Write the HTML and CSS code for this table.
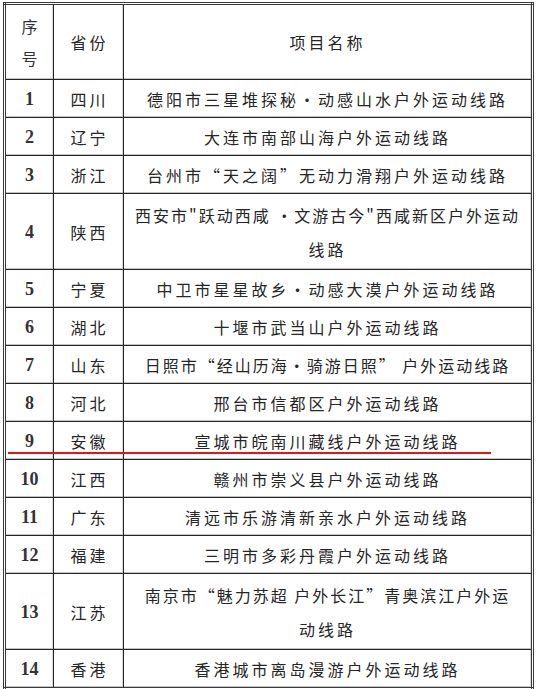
FILE: index.html
```html
<!DOCTYPE html>
<html lang="zh-CN">
<head>
<meta charset="utf-8">
<link rel="stylesheet" href="styles.css">
</head>
<body>
<div class="sheet">
  <table class="list">
    <colgroup>
      <col class="c-no">
      <col class="c-prov">
      <col class="c-name">
    </colgroup>
    <tr class="head">
      <td class="no hd"><span class="hd-line">序</span><span class="hd-line">号</span></td>
      <td class="prov">省份</td>
      <td class="name">项目名称</td>
    </tr>
    <tr><td class="no">1</td><td class="prov">四川</td><td class="name">德阳市三星堆探秘•动感山水户外运动线路</td></tr>
    <tr><td class="no">2</td><td class="prov">辽宁</td><td class="name">大连市南部山海户外运动线路</td></tr>
    <tr><td class="no">3</td><td class="prov">浙江</td><td class="name">台州市“天之阔”无动力滑翔户外运动线路</td></tr>
    <tr class="tall"><td class="no">4</td><td class="prov">陕西</td><td class="name two"><span class="line tight">西安市"跃动西咸 •文游古今"西咸新区户外运动</span><span class="line">线路</span></td></tr>
    <tr><td class="no">5</td><td class="prov">宁夏</td><td class="name">中卫市星星故乡•动感大漠户外运动线路</td></tr>
    <tr><td class="no">6</td><td class="prov">湖北</td><td class="name">十堰市武当山户外运动线路</td></tr>
    <tr><td class="no">7</td><td class="prov">山东</td><td class="name"><span class="tight">日照市“经山历海•骑游日照” 户外运动线路</span></td></tr>
    <tr><td class="no">8</td><td class="prov">河北</td><td class="name">邢台市信都区户外运动线路</td></tr>
    <tr><td class="no">9</td><td class="prov">安徽</td><td class="name">宣城市皖南川藏线户外运动线路</td></tr>
    <tr><td class="no">10</td><td class="prov">江西</td><td class="name">赣州市崇义县户外运动线路</td></tr>
    <tr><td class="no">11</td><td class="prov">广东</td><td class="name">清远市乐游清新亲水户外运动线路</td></tr>
    <tr><td class="no">12</td><td class="prov">福建</td><td class="name">三明市多彩丹霞户外运动线路</td></tr>
    <tr class="tall"><td class="no">13</td><td class="prov">江苏</td><td class="name two"><span class="line tight">南京市“魅力苏超 户外长江”青奥滨江户外运</span><span class="line">动线路</span></td></tr>
    <tr><td class="no">14</td><td class="prov">香港</td><td class="name">香港城市离岛漫游户外运动线路</td></tr>
  </table>
  <div class="mark"></div>
</div>
</body>
</html>
```

FILE: styles.css
```css
html, body {
  margin: 0;
  padding: 0;
  background: #ffffff;
}

body {
  width: 538px;
  height: 689px;
  overflow: hidden;
  font-family: "Noto Sans CJK SC", "Liberation Serif", serif;
  color: #262626;
}

.sheet {
  position: relative;
  padding: 2px 0 0 3px;
}

.list {
  border-collapse: collapse;
  table-layout: fixed;
  width: 531px;
  border: 3px double #3a3a3a;
}

.c-no { width: 49px; }
.c-prov { width: 70px; }
.c-name { width: 409px; }

.list td {
  border: 1px solid #262626;
  box-shadow: inset 0 -1px 0 #c4c4c4, inset -1px 0 0 #d8d8d8;
  text-align: center;
  vertical-align: middle;
  padding: 0;
  height: 37px;
  font-size: 16px;
  letter-spacing: 3px;
  line-height: 20px;
  white-space: nowrap;
  overflow: hidden;
}

.list tr.head td {
  height: 74px;
}

.list tr.tall td {
  height: 75px;
}

.list td.no {
  font-family: "Liberation Serif", serif;
  font-weight: bold;
  font-size: 18px;
  letter-spacing: 0;
  color: #333333;
}

.list td.hd {
  font-family: "Noto Sans CJK SC", serif;
  font-weight: normal;
  font-size: 16px;
}

.hd-line {
  display: block;
  line-height: 32px;
}

.list td.prov {
  letter-spacing: 3px;
  padding-left: 2px;
}

.list td.name {
  padding: 0 2px;
}

.line {
  display: block;
  line-height: 34px;
}

.tight {
  letter-spacing: 2px;
}

.mark {
  position: absolute;
  left: 8px;
  top: 452px;
  width: 483px;
  height: 2px;
  background: #e8141b;
}
```
